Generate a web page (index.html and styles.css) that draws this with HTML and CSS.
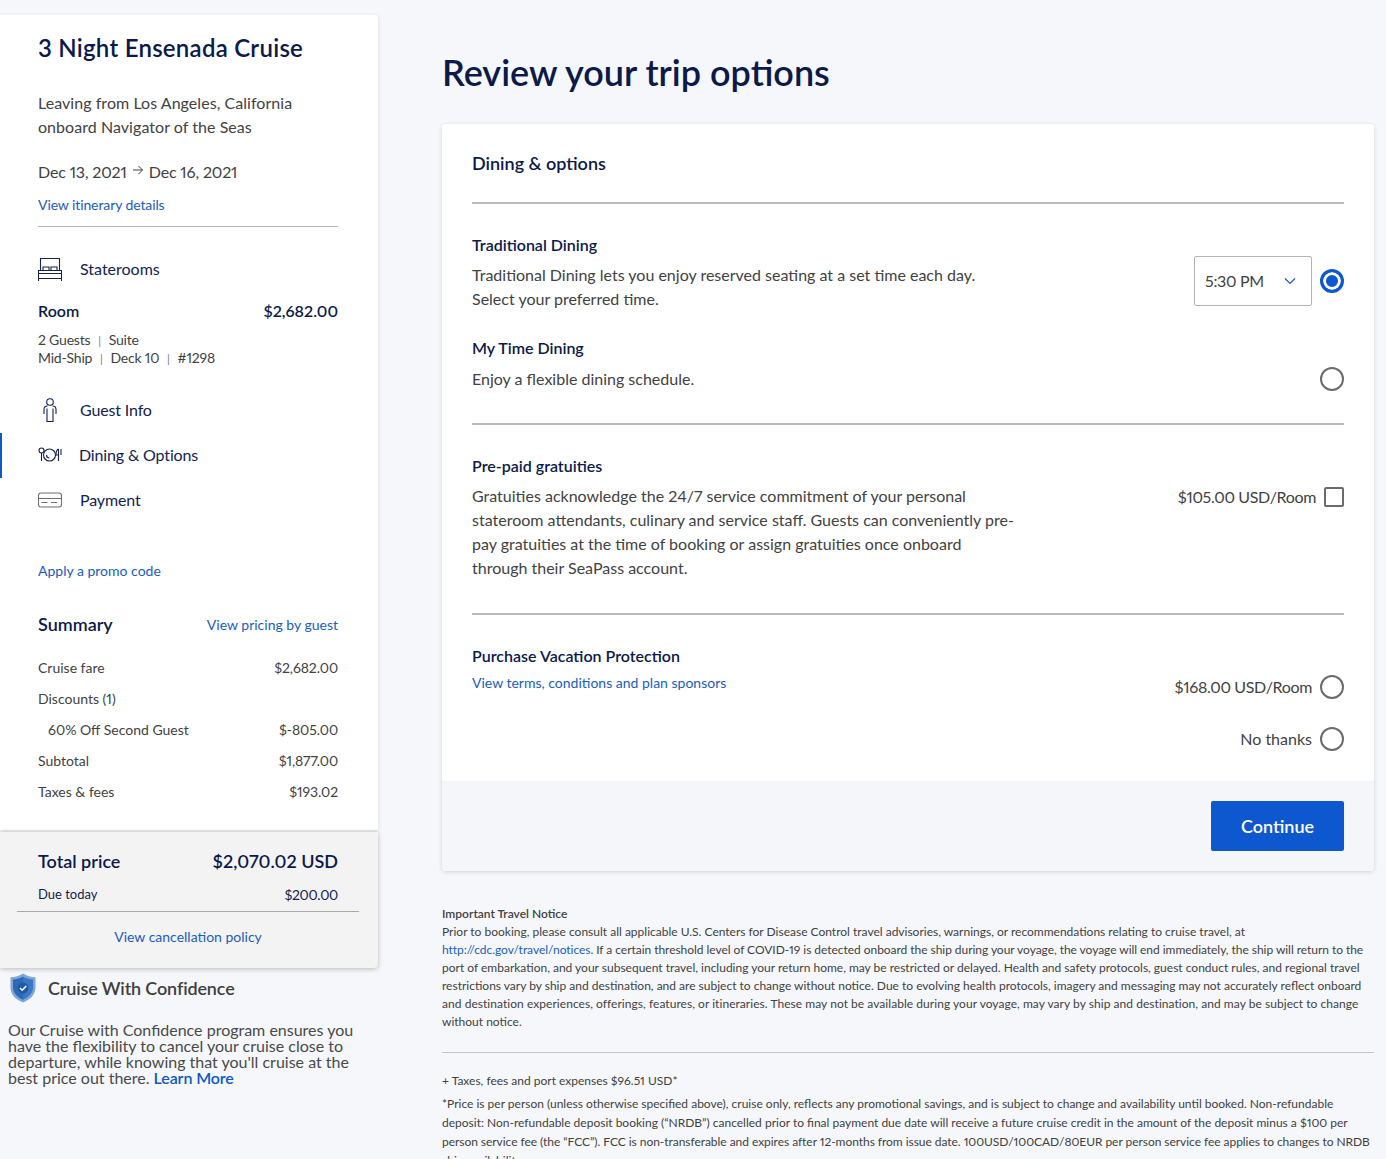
FILE: index.html
```html
<!DOCTYPE html>
<html lang="en">

<head>
    <meta charset="UTF-8"/>
    <title>Review your trip options</title>
    <link rel="stylesheet" href="styles.css">
</head>

<body>
    <div class="page">
        <!-- left column -->
        <aside class="side">
            <div class="side-card">
                <h2 class="cruise-name">3 Night Ensenada Cruise</h2>
                <p class="leaving">Leaving from Los Angeles, California<br/>onboard Navigator of the Seas</p>
                <p class="dates">
                    <span>Dec 13, 2021</span>
                    <svg class="date-arrow" viewBox="0 0 12 12" width="12" height="12"><path d="M1 6h9.5M6.5 2l4 4-4 4"/></svg>
                    <span>Dec 16, 2021</span>
                </p>
                <a class="link itinerary">View itinerary details</a>
                <div class="side-line"></div>

                <div class="nav-row staterooms">
                    <svg class="nav-icon" viewBox="0 0 24 24" width="24" height="24">
                        <path d="M2.5 13.5V1.500h19V13.500M.5 13.500h23v8H.5zM.5 16.500h23M.5 21.500V24M23.500 21.500V24M5 13.500V10h6v3.500M13 13.500V10h6v3.500"/>
                    </svg>
                    <span>Staterooms</span>
                </div>
                <div class="room-row">
                    <span>Room</span>
                    <span class="room-price">$2,682.00</span>
                </div>
                <p class="room-info">2 Guests <i>|</i> Suite<br/>Mid-Ship <i>|</i> Deck 10 <i>|</i> #1298</p>

                <div class="nav-list">
                    <div class="nav-row">
                        <svg class="nav-icon" viewBox="0 0 24 24" width="24" height="24">
                            <circle cx="12" cy="4" r="3.300"/>
                            <path d="M9.500 8Q6 8 6 11.500V16M14.500 8Q18 8 18 11.500V16M9 10.500V23.500h6V10.500"/>
                        </svg>
                        <span>Guest Info</span>
                    </div>
                    <div class="nav-row active">
                        <svg class="nav-icon" viewBox="0 0 24 24" width="24" height="24">
                            <circle cx="3.500" cy="7.500" r="2.500"/>
                            <path d="M3.500 10V18M20.500 6v12M20.500 6q-2.500 1-2.500 6h2.500M23 6v6"/>
                            <circle cx="11.500" cy="12" r="6"/>
                            <path d="M8.500 12a3 3 0 0 0 3 3"/>
                        </svg>
                        <span>Dining &amp; Options</span>
                    </div>
                    <div class="nav-row">
                        <svg class="nav-icon grey" viewBox="0 0 24 24" width="24" height="24">
                            <rect x="0.500" y="5" width="23" height="14" rx="2.500"/>
                            <path d="M.5 10.500h23M3.500 14.500h6M13 14.500h6"/>
                        </svg>
                        <span>Payment</span>
                    </div>
                </div>

                <a class="link promo">Apply a promo code</a>

                <div class="summary-head">
                    <h3>Summary</h3>
                    <a class="link">View pricing by guest</a>
                </div>
                <ul class="fares">
                    <li><span>Cruise fare</span><span class="fare-price">$2,682.00</span></li>
                    <li><span>Discounts (1)</span></li>
                    <li class="sub"><span>60% Off Second Guest</span><span class="fare-price">$-805.00</span></li>
                    <li><span>Subtotal</span><span class="fare-price">$1,877.00</span></li>
                    <li><span>Taxes &amp; fees</span><span class="fare-price">$193.02</span></li>
                </ul>
            </div>

            <div class="total-box">
                <div class="total-row">
                    <span>Total price</span>
                    <span class="total-price">$2,070.02 USD</span>
                </div>
                <div class="due-row">
                    <span class="due-label">Due today</span>
                    <span class="due-price">$200.00</span>
                </div>
                <div class="total-line"></div>
                <a class="link cancel">View cancellation policy</a>
            </div>

            <div class="confidence">
                <svg viewBox="0 0 26 30" width="26" height="30">
                    <path class="shield-out" d="M13 .5C9.500 3 5 4 .5 4.200V14c0 7.500 5 12.500 12.500 15.500C20.500 26.500 25.500 21.500 25.500 14V4.200C21 4 16.500 3 13 .5z"/>
                    <path class="shield-in" d="M13 3.500C10.500 5.300 7 6.200 3 6.500V14c0 6 4 10 10 12.800V3.500z"/>
                    <path class="shield-in2" d="M13 3.500C15.500 5.300 19 6.200 23 6.500V14c0 6-4 10-10 12.800V3.500z"/>
                    <circle class="shield-dot" cx="13" cy="15" r="5.500"/>
                    <path class="shield-tick" d="M10 15l2.200 2.200L16.200 13"/>
                </svg>
                <span>Cruise With Confidence</span>
            </div>
            <p class="confidence-text">Our Cruise with Confidence program ensures you have the flexibility to cancel your cruise close to departure, while knowing that you'll cruise at the best price out there. <a>Learn More</a></p>
        </aside>

        <!-- right column -->
        <main class="main">
            <h1>Review your trip options</h1>
            <div class="card">
                <div class="card-body">
                    <h2 class="card-title">Dining &amp; options</h2>
                    <div class="line title-line"></div>

                    <div class="option first">
                        <div>
                            <h3>Traditional Dining</h3>
                            <p>Traditional Dining lets you enjoy reserved seating at a set time each day.<br/>Select your preferred time.</p>
                        </div>
                        <div class="time-pick">
                            <div class="select">
                                <span class="time">5:30 PM</span>
                                <svg viewBox="0 0 12 8" width="12" height="8"><path d="M1 1.500l5 5 5-5"/></svg>
                            </div>
                            <span class="radio on"></span>
                        </div>
                    </div>
                    <div class="option second">
                        <div>
                            <h3>My Time Dining</h3>
                            <p>Enjoy a flexible dining schedule.</p>
                        </div>
                        <span class="radio flex-radio"></span>
                    </div>
                    <div class="line"></div>

                    <div class="option first">
                        <div>
                            <h3>Pre-paid gratuities</h3>
                            <p>Gratuities acknowledge the 24/7 service commitment of your personal<br/>stateroom attendants, culinary and service staff. Guests can conveniently pre-<br/>pay gratuities at the time of booking or assign gratuities once onboard<br/>through their SeaPass account.</p>
                        </div>
                        <div class="gratuity">
                            <span class="room-rate">$105.00 USD/Room</span>
                            <span class="check"></span>
                        </div>
                    </div>
                    <div class="line"></div>

                    <div class="option first">
                        <div>
                            <h3>Purchase Vacation Protection</h3>
                            <a class="link terms">View terms, conditions and plan sponsors</a>
                        </div>
                        <div class="protect">
                            <div class="protect-row"><span class="room-rate">$168.00 USD/Room</span><span class="radio"></span></div>
                            <div class="protect-row"><span>No thanks</span><span class="radio"></span></div>
                        </div>
                    </div>
                </div>
                <div class="card-foot">
                    <button>Continue</button>
                </div>
            </div>

            <div class="notice">
                <strong>Important Travel Notice</strong><br/>
                Prior to booking, please consult all applicable U.S. Centers for Disease Control travel advisories, warnings, or recommendations relating to cruise travel, at<br/>
                <span class="tight"><a>http://cdc.gov/travel/notices.</a> If a certain threshold level of COVID-19 is detected onboard the ship during your voyage, the voyage will end immediately, the ship will return to the</span><br/>
                port of embarkation, and your subsequent travel, including your return home, may be restricted or delayed. Health and safety protocols, guest conduct rules, and regional travel<br/>
                restrictions vary by ship and destination, and are subject to change without notice. Due to evolving health protocols, imagery and messaging may not accurately reflect onboard<br/>
                <span class="wide">and destination experiences, offerings, features, or itineraries. These may not be available during your voyage, may vary by ship and destination, and may be subject to change</span><br/>
                without notice.
            </div>
            <div class="notice-line"></div>
            <p class="fees">+ Taxes, fees and port expenses $96.51 USD*</p>
            <p class="fine">*Price is per person (unless otherwise specified above), cruise only, reflects any promotional savings, and is subject to change and availability until booked. Non-refundable<br/>
                deposit: Non-refundable deposit booking (“NRDB”) cancelled prior to final payment due date will receive a future cruise credit in the amount of the deposit minus a $100 per<br/>
                <span class="tight">person service fee (the “FCC”). FCC is non-transferable and expires after 12-months from issue date. 100USD/100CAD/80EUR per person service fee applies to changes to NRDB</span><br/>
                ship availability.</p>
        </main>
    </div>
</body>

</html>
```

FILE: styles.css
```css
* {
    margin: 0;
    padding: 0;
    box-sizing: border-box;
}

html,
body {
    height: 1159px;
    overflow: hidden;
}

body {
    background: #f5f7fa;
    color: #424242;
    font: 16px/24px Lato, "Open Sans", sans-serif;
    font-variant-numeric: proportional-nums;
}

ul {
    list-style: none;
}

h1,
h2,
h3 {
    color: #0b1a4b;
    font-weight: 600;
}

.link {
    display: block;
    color: #1a5cc4;
    font-size: 14px;
    line-height: 20px;
}

.page {
    display: flex;
    gap: 64px;
    padding-right: 12px;
}

/* left column */
.side {
    width: 378px;
    flex-shrink: 0;
}

.side-card {
    margin-top: 15px;
    padding: 16px 40px 23px 38px;
    background: #fff;
    border-radius: 0 4px 0 0;
    box-shadow: 0 1px 4px rgba(0, 0, 0, 0.12);
}

.cruise-name {
    font-size: 24px;
    line-height: 34px;
    letter-spacing: 0.25px;
}

.leaving {
    margin-top: 26px;
    letter-spacing: 0.05px;
}

.dates {
    margin-top: 21px;
    display: flex;
    align-items: center;
    gap: 5px;
    letter-spacing: -0.15px;
}

.date-arrow {
    margin-top: -4px;
}

.date-arrow path {
    fill: none;
    stroke: #424242;
    stroke-width: 1;
}

.itinerary {
    margin-top: 11px;
    letter-spacing: -0.1px;
}

.side-line {
    margin-top: 11px;
    height: 1px;
    background: #b4b6bc;
}

.nav-row {
    height: 45px;
    padding-bottom: 2px;
    display: flex;
    align-items: center;
    gap: 18px;
    color: #14234f;
}

.nav-icon {
    flex-shrink: 0;
    fill: none;
    stroke: #14234f;
    stroke-width: 1.1;
}

.nav-icon.grey {
    stroke: #6d6f75;
}

.staterooms {
    margin-top: 20px;
}

.room-row {
    margin-top: 7px;
    display: flex;
    justify-content: space-between;
    color: #0b1a4b;
    font-weight: 600;
}

.room-info {
    margin-top: 8px;
    font-size: 14px;
    line-height: 18px;
    letter-spacing: -0.2px;
}

.room-info i {
    margin: 0 4.5px;
    font-style: normal;
    font-size: 11px;
    line-height: 1;
    color: #777;
}

.nav-list {
    margin-top: 21px;
    letter-spacing: -0.15px;
}

.nav-row.active {
    position: relative;
    gap: 17px;
}

.nav-row.active::before {
    content: "";
    position: absolute;
    left: -38px;
    top: 0;
    width: 2px;
    height: 45px;
    background: #0d58cf;
}

.promo {
    margin-top: 38px;
}

.summary-head {
    margin-top: 31px;
    display: flex;
    justify-content: space-between;
    align-items: center;
}

.summary-head h3 {
    font-size: 18px;
}

.summary-head .link {
    margin-top: 2px;
}

.fares {
    margin-top: 16px;
}

.fares li {
    height: 31px;
    display: flex;
    justify-content: space-between;
    align-items: center;
    font-size: 14px;
}

.fare-price {
    letter-spacing: -0.1px;
}

.fares .sub {
    padding-left: 10px;
}

.total-box {
    margin-top: 2px;
    padding: 17px 19px 21px 17px;
    height: 136px;
    background: #f3f3f4;
    border-radius: 0 0 4px 0;
    box-shadow: 0 1px 5px rgba(0, 0, 0, 0.25);
}

.total-row {
    padding: 0 21px;
    display: flex;
    justify-content: space-between;
    color: #0b1a4b;
    font-size: 18px;
    font-weight: 600;
}

.due-row {
    margin-top: 11px;
    padding: 0 21px;
    display: flex;
    justify-content: space-between;
    color: #14234f;
    font-size: 14px;
    line-height: 20px;
}

.due-label {
    font-size: 13px;
}

.due-price {
    margin-top: 1px;
    letter-spacing: -0.3px;
}

.total-line {
    margin-top: 6px;
    height: 1px;
    background: #a9aaad;
}

.cancel {
    margin-top: 15px;
    text-align: center;
}

.confidence {
    height: 40px;
    padding-left: 10px;
    display: flex;
    align-items: center;
    gap: 12px;
    font-size: 18px;
    font-weight: 600;
    letter-spacing: -0.15px;
    color: #3f3f3f;
}

.shield-out {
    fill: #7ea6d8;
}

.shield-in {
    fill: #2f68b4;
}

.shield-in2 {
    fill: #3d78c4;
}

.shield-dot {
    fill: #1f5aa8;
}

.shield-tick {
    fill: none;
    stroke: #fff;
    stroke-width: 1.6;
}

.confidence-text {
    margin-top: 14px;
    padding-left: 8px;
    font-size: 16px;
    line-height: 16px;
    color: #4a4a4a;
}

.confidence-text a {
    color: #0d58cf;
    font-weight: 600;
    letter-spacing: -0.1px;
}

/* right column */
.main {
    flex: 1;
    min-width: 0;
}

.main h1 {
    margin-top: 50px;
    font-size: 36px;
    line-height: 44px;
}

.card {
    margin-top: 30px;
    background: #fff;
    border-radius: 4px;
    box-shadow: 0 1px 4px rgba(0, 0, 0, 0.15);
    overflow: hidden;
}

.card-body {
    height: 657px;
    padding: 27px 30px 0;
}

.card-title {
    font-size: 18px;
}

.line {
    height: 2px;
    background: #b9bbbf;
}

.title-line {
    margin-top: 27px;
}

.option {
    display: flex;
    justify-content: space-between;
    align-items: flex-start;
}

.option.first {
    margin-top: 29px;
}

.option.second {
    margin-top: 25px;
    margin-bottom: 32px;
}

.option.second p {
    margin-top: 7px;
}

.option + .line {
    margin-top: 33px;
}

.option.second + .line {
    margin-top: 0;
}

.option h3 {
    font-size: 16px;
}

.option p {
    margin-top: 6px;
}

.time-pick {
    margin-top: 23px;
    display: flex;
    align-items: center;
    gap: 8px;
}

.select {
    width: 118px;
    height: 50px;
    padding: 0 15px 0 10px;
    display: flex;
    justify-content: space-between;
    align-items: center;
    border: 1px solid #b4b4b4;
    border-radius: 2px;
}

.time {
    letter-spacing: -0.3px;
}

.select svg {
    fill: none;
    stroke: #1a5cc4;
    stroke-width: 1.2;
}

.radio {
    width: 24px;
    height: 24px;
    flex-shrink: 0;
    display: block;
    border: 2px solid #6b6b6b;
    border-radius: 50%;
    background: #fff;
}

.radio.on {
    border: 3px solid #0d58cf;
    box-shadow: inset 0 0 0 3px #fff;
    background: #0d58cf;
}

.flex-radio {
    margin-top: 31px;
}

.gratuity {
    margin-top: 31px;
    display: flex;
    align-items: center;
    gap: 8px;
}

.room-rate {
    letter-spacing: -0.35px;
}

.check {
    width: 20px;
    height: 20px;
    border: 2px solid #6b6b6b;
    border-radius: 2px;
}

.terms {
    margin-top: 5px;
}

.protect {
    margin-top: 31px;
}

.protect-row {
    display: flex;
    justify-content: flex-end;
    align-items: center;
    gap: 8px;
}

.protect-row + .protect-row {
    margin-top: 28px;
}

.card-foot {
    height: 90px;
    padding: 20px 30px;
    display: flex;
    justify-content: flex-end;
    background: #f4f6f9;
}

.card-foot button {
    width: 133px;
    height: 50px;
    padding-bottom: 1px;
    border: none;
    border-radius: 2px;
    background: #0d58cf;
    color: #fff;
    font: 600 18px Lato, sans-serif;
}

.notice {
    margin-top: 34px;
    font-size: 12px;
    line-height: 18px;
    white-space: nowrap;
}

.notice strong {
    font-weight: 600;
}

.notice a {
    color: #1a5cc4;
}

.tight {
    letter-spacing: -0.045px;
}

.wide {
    letter-spacing: 0.045px;
}

.notice-line {
    margin-top: 21px;
    height: 1px;
    background: #c2c4c8;
}

.fees {
    margin-top: 19px;
    font-size: 12px;
    line-height: 18px;
}

.fine {
    margin-top: 4px;
    font-size: 12px;
    line-height: 19px;
    white-space: nowrap;
}
```
